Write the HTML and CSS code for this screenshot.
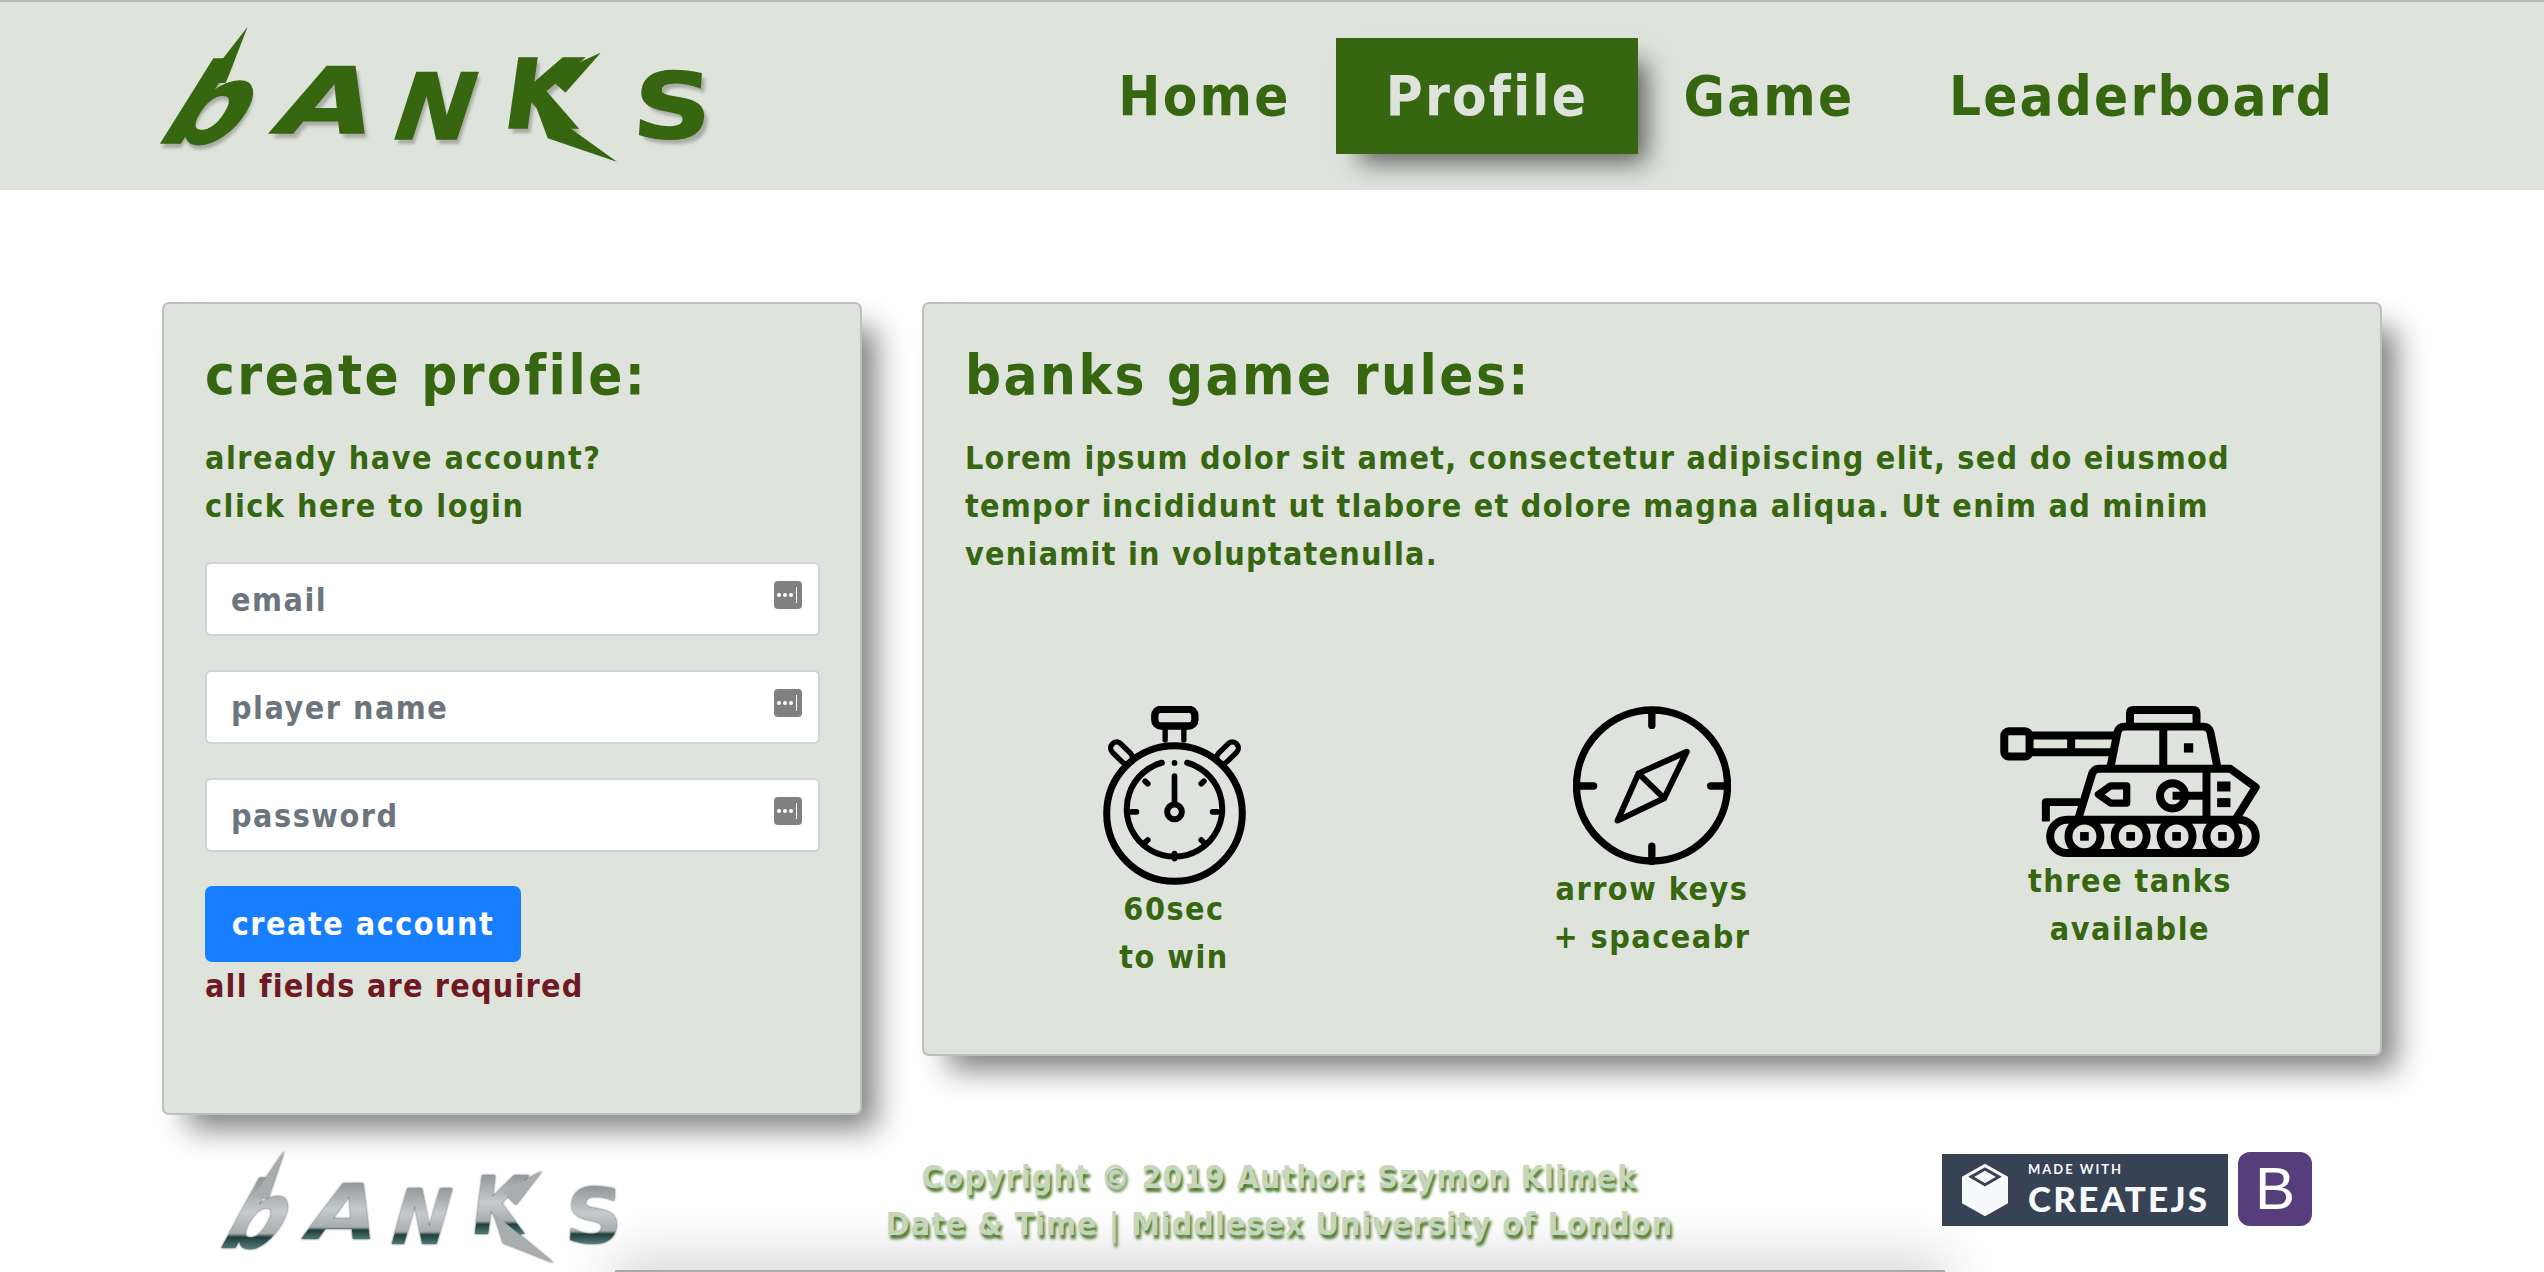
FILE: index.html
```html
<!DOCTYPE html>
<html lang="en">

<head>
    <meta charset="UTF-8">
    <meta name="viewport" content="width=device-width, initial-scale=1.0">
    <title>Banks - Profile</title>
    <link rel="stylesheet" href="styles.css">
</head>
<body>
    <header class="topbar">
        <div class="logo" aria-label="banks">
            <span class="l-b">b</span><span class="l-a">A</span><span class="l-n">N</span><span class="l-k">K</span><span class="l-s">S</span>
        </div>
        <nav class="menu">
            <a href="#">Home</a>
            <a href="#" class="active">Profile</a>
            <a href="#">Game</a>
            <a href="#">Leaderboard</a>
        </nav>
    </header>

    <main class="content">
        <section class="card card-profile">
            <h2>create profile:</h2>
            <p class="intro">already have account?<br>click here to login</p>
            <form class="profile-form">
                <div class="field">
                    <input type="text" placeholder="email">
                    <span class="key-icon"><i></i><i></i><i></i><b></b></span>
                </div>
                <div class="field">
                    <input type="text" placeholder="player name">
                    <span class="key-icon"><i></i><i></i><i></i><b></b></span>
                </div>
                <div class="field">
                    <input type="password" placeholder="password">
                    <span class="key-icon"><i></i><i></i><i></i><b></b></span>
                </div>
                <button type="button">create account</button>
                <p class="error">all fields are required</p>
            </form>
        </section>

        <section class="card card-rules">
            <h2>banks game rules:</h2>
            <p class="rules-text">Lorem ipsum dolor sit amet, consectetur adipiscing elit, sed do eiusmod<br>tempor incididunt ut tlabore et dolore magna aliqua. Ut enim ad minim<br>veniamit in voluptatenulla.</p>
            <div class="rules-icons">
                <div class="rule">
                    <svg class="ic-watch" viewBox="130 48 428 536" fill="none" stroke="#000" stroke-linecap="round" stroke-linejoin="round">
                        <rect x="285" y="58" width="120" height="50" rx="18" stroke-width="22"/>
                        <path d="M316 108v42M372 108v42" stroke-width="16"/>
                        <rect x="-38" y="-18" width="76" height="36" rx="18" stroke-width="16" transform="translate(185 188) rotate(45)"/>
                        <rect x="-38" y="-18" width="76" height="36" rx="18" stroke-width="16" transform="translate(503 188) rotate(-45)"/>
                        <circle cx="344" cy="370" r="203" fill="#dee3dc" stroke-width="21"/>
                        <path d="M306 218A143 143 0 1 0 382 218" stroke-width="18"/>
                        <circle cx="344" cy="365" r="22" stroke-width="18"/>
                        <path d="M344 258v80M344 218v.5M215 365h15M473 365h-15M256 273l8 8M432 273l-8 8M256 457l8-8M432 457l-8-8M344 505v-15" stroke-width="17"/>
                    </svg>
                    <p>60sec<br>to win</p>
                </div>
                <div class="rule">
                    <svg class="ic-compass" viewBox="128 48 475 477" fill="none" stroke="#000" stroke-linecap="round" stroke-linejoin="round">
                        <circle cx="365.500" cy="286.500" r="227" stroke-width="22"/>
                        <path d="M365 62v44M365 515v-46M146 288h44M586 288h-44" stroke-width="22"/>
                        <path d="M470 185 325 250 262 392 402 325zM325 250l77 75" stroke-width="18"/>
                    </svg>
                    <p>arrow keys<br>+ spaceabr</p>
                </div>
                <div class="rule">
                    <svg class="ic-tank" viewBox="60 48 780 454" fill="none" stroke="#000" stroke-width="24" stroke-linejoin="round">
                        <rect x="72" y="124" width="76" height="76" rx="14"/>
                        <path d="M148 137H402M148 187H392M273 137v50"/>
                        <path d="M450 105V70q0-10 10-10H640q10 0 10 10v35"/>
                        <path d="M392 228 412 128q4-18 22-18H670q18 0 22 18L712 228M550 110V228"/>
                        <path d="M295 385 335 255q6-18 22-18H752L828 292 770 385M680 237V385"/>
                        <path d="M300 337H197V395"/>
                        <rect x="210" y="390" width="618" height="100" rx="50"/>
                        <circle cx="313" cy="440" r="48"/><circle cx="452" cy="440" r="48"/><circle cx="590" cy="440" r="48"/><circle cx="728" cy="440" r="48"/>
                        <circle cx="578" cy="318" r="38"/>
                        <path d="M578 318H680"/>
                        <path d="M440 288H392L355 314 392 340H440Z" stroke-width="22"/>
                        <g fill="#000" stroke="none">
                            <rect x="300" y="427" width="26" height="26"/><rect x="439" y="427" width="26" height="26"/><rect x="577" y="427" width="26" height="26"/><rect x="715" y="427" width="26" height="26"/>
                            <rect x="612" y="160" width="28" height="28"/>
                            <rect x="712" y="275" width="40" height="30"/><rect x="712" y="325" width="40" height="27"/>
                        </g>
                    </svg>
                    <p>three tanks<br>available</p>
                </div>
            </div>
        </section>
    </main>

    <footer class="bottom">
        <div class="logo logo-metal" aria-label="banks">
            <span class="l-b">b</span><span class="l-a">A</span><span class="l-n">N</span><span class="l-k">K</span><span class="l-s">S</span>
        </div>
        <p class="copy">Copyright © 2019 Author: Szymon Klimek<br>Date &amp; Time | Middlesex University of London</p>
        <div class="badges">
            <div class="createjs">
                <svg viewBox="185 130 140 160" width="46" height="54">
                    <path fill="#f7f9fc" d="M255 130 325 170V250L255 290 185 250V170Z"/>
                    <path fill="none" stroke="#374354" stroke-width="9" d="M255 146 297 170 255 194 213 170Z"/>
                </svg>
                <div class="createjs-text"><small>MADE WITH</small><strong>CREATEJS</strong></div>
            </div>
            <div class="boot">B</div>
        </div>
    </footer>
    <div class="bottom-line"></div>
</body>

</html>
```

FILE: styles.css
```css
html, body {
    height: 1272px;
    overflow: hidden;
}

body {
    margin: 0;
    background-color: #ffffff;
    color: #36660f;
    font-family: "DejaVu Sans", sans-serif;
    font-stretch: condensed;
    font-weight: bold;
}

/* top bar */
.topbar {
    height: 188px;
    border-top: 2px solid #b9bcb7;
    background-color: #dee3dc;
    padding-left: 162px;
    padding-right: 162px;
    display: flex;
    align-items: center;
    justify-content: space-between;
}

/* logo letters are sized in em so the footer copy can reuse them */
.logo {
    display: flex;
    align-items: flex-end;
    width: 5.680em;
    height: 1.350em;
    font-size: 96px;
    font-stretch: normal;
    line-height: 1;
    text-shadow: .040em .050em .030em #a9ada6;
}

.logo span {
    display: block;
    position: relative;
    transform-origin: left bottom;
    -webkit-text-stroke: .015em currentColor;
}

.logo .l-b { width: 1.100em; font-size: 1.150em; transform: translateX(-.190em) skewX(-32deg); }
.logo .l-a { width: 1.240em; font-size: .950em; transform: translate(-.210em, -.150em) skewX(-20deg) scaleX(1.350); }
.logo .l-n { width: 1.150em; font-size: .950em; transform: translate(-.165em, -.090em) skewX(-18deg) scaleX(1.030); }
.logo .l-k { width: 1.340em; font-size: 1em; transform: translate(-.030em, -.190em) skewX(-8deg); }
.logo .l-s { width: .800em; font-size: .950em; transform: translateY(-.100em) skewX(-4deg) scaleX(1.200); }

/* the spikes of the hand drawn lettering */
.logo .l-b::before {
    content: "";
    position: absolute;
    left: .130em;
    bottom: .700em;
    width: .200em;
    height: .510em;
    background-color: currentColor;
    clip-path: polygon(40% 0, 100% 100%, 0 100%);
}

.logo .l-k::before {
    content: "";
    position: absolute;
    left: .420em;
    bottom: .520em;
    width: .520em;
    height: .420em;
    background-color: currentColor;
    clip-path: polygon(0 60%, 100% 0, 40% 100%);
}

.logo .l-k::after {
    content: "";
    position: absolute;
    left: .320em;
    bottom: -.200em;
    width: .950em;
    height: .620em;
    background-color: currentColor;
    clip-path: polygon(0 0, 100% 100%, 20% 60%);
}

.logo-metal {
    width: 395px;
    height: 94px;
    font-size: 70px;
    text-shadow: none;
    filter: drop-shadow(0 0 1px #3a4244);
    transform: scaleY(1.150);
    transform-origin: left top;
}

.logo-metal span {
    background: linear-gradient(#83898b 0, #c4cbcc 45%, #a8adae 68%, #1f3c3c 72%, #6fa3a1 92%);
    -webkit-background-clip: text;
    background-clip: text;
    color: #a8adae;
    -webkit-text-fill-color: transparent;
    -webkit-text-stroke: 0;
}

.menu {
    display: grid;
    grid-template-columns: 263px 302px 262px 483px;
    align-items: center;
    margin-right: -1px;
}

.menu a {
    height: 116px;
    line-height: 116px;
    text-align: center;
    font-size: 56px;
    letter-spacing: 2.200px;
    color: #36660f;
    text-decoration: none;
}

.menu a.active {
    background-color: #36660f;
    color: #dee3dc;
    box-shadow: 16px 16px 24px -8px rgba(0, 0, 0, .6);
}

/* cards */
.content {
    display: flex;
    align-items: flex-start;
    gap: 60px;
    height: 960px;
    box-sizing: border-box;
    padding: 112px 0 0 162px;
}

.card {
    box-sizing: border-box;
    background-color: #dee3dc;
    border: 2px solid #bcc1ba;
    border-radius: 7px;
    box-shadow: 20px 20px 30px -6px rgba(0, 0, 0, .5);
    padding: 37px 41px;
}

.card h2 {
    margin: 0 0 25px;
    font-size: 56px;
    line-height: 68px;
    letter-spacing: 2.500px;
}

.card p {
    margin: 0;
}

.card-profile {
    width: 700px;
    height: 813px;
}

.card-rules {
    width: 1460px;
    height: 754px;
}

.intro, .rules-text {
    font-size: 32px;
    line-height: 48px;
    letter-spacing: 1.500px;
}

.rules-text {
    letter-spacing: 1.250px;
}

.profile-form {
    margin-top: 32px;
    width: 615px;
}

.field {
    position: relative;
    height: 74px;
    margin-bottom: 34px;
}

.field input {
    box-sizing: border-box;
    width: 100%;
    height: 74px;
    border: 2px solid #ced4da;
    border-radius: 6px;
    padding: 2px 24px 0;
    font: inherit;
    font-size: 32px;
    letter-spacing: 1.500px;
    background: #ffffff;
    outline: none;
}

.field input::placeholder {
    color: #6c757d;
    opacity: 1;
}

.key-icon {
    position: absolute;
    top: 19px;
    right: 18px;
    width: 28px;
    height: 28px;
    border-radius: 4px;
    background-color: #808080;
    display: flex;
    align-items: center;
    gap: 2px;
    padding-left: 3px;
    box-sizing: border-box;
}

.key-icon i {
    width: 4px;
    height: 4px;
    border-radius: 50%;
    background: #ffffff;
}

.key-icon b {
    width: 1px;
    height: 16px;
    margin-left: 1px;
    background: #ffffff;
}

.profile-form button {
    display: block;
    width: 316px;
    height: 76px;
    padding: 0;
    border: 0;
    border-radius: 7px;
    background-color: #177fff;
    color: #ffffff;
    font: inherit;
    font-size: 32px;
    letter-spacing: 1.500px;
}

.card .error {
    color: #6f1a22;
    font-size: 32px;
    line-height: 48px;
    letter-spacing: 1.200px;
}

/* the three icons */
.rules-icons {
    display: flex;
    justify-content: center;
    align-items: flex-start;
    gap: 178px;
    margin-top: 128px;
}

.rule {
    width: 300px;
    display: flex;
    flex-direction: column;
    align-items: center;
    text-align: center;
    font-size: 32px;
    line-height: 48px;
    letter-spacing: 1.500px;
}

.rule svg { display: block; }
.ic-watch { width: 143px; height: 179px; }
.ic-compass { width: 158px; height: 159px; }
.ic-tank { width: 260px; height: 151px; }

/* footer */
.bottom {
    position: relative;
    height: 120px;
    box-sizing: border-box;
    padding: 4px 232px 0 222px;
    display: flex;
    justify-content: space-between;
}

.copy {
    margin: 0;
    font-size: 32px;
    line-height: 47px;
    letter-spacing: 1px;
    text-align: center;
    color: #c6d6bb;
    text-shadow: 2px 4px 3px #4c7a2e;
}

.badges {
    display: flex;
    gap: 10px;
    align-items: flex-start;
    margin-top: -2px;
}

.createjs {
    width: 286px;
    height: 72px;
    margin-top: 2px;
    background-color: #374354;
    display: flex;
    align-items: center;
    gap: 20px;
    padding-left: 20px;
    box-sizing: border-box;
    color: #f7f9fc;
    font-family: Lato, sans-serif;
    font-stretch: normal;
}

.createjs-text small {
    display: block;
    font-size: 13px;
    letter-spacing: 2px;
}

.createjs-text strong {
    display: block;
    font-size: 35px;
    letter-spacing: 2.200px;
}

.boot {
    width: 74px;
    height: 74px;
    border-radius: 12px;
    background-color: #563d7c;
    color: #ffffff;
    font-family: "Liberation Sans", sans-serif;
    font-stretch: normal;
    font-weight: normal;
    font-size: 60px;
    line-height: 74px;
    text-align: center;
}

.bottom-line {
    height: 30px;
    margin: 0 599px 0 615px;
    background-color: #dee3dc;
    border-top: 2px solid #aaaaaa;
    box-shadow: 0 -2px 60px rgba(0, 0, 0, .3);
}
```
